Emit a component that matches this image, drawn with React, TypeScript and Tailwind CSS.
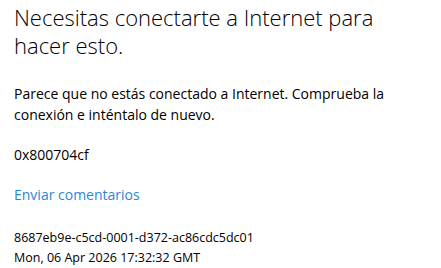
const App = () => {
  return (
    <div className="w-[441px] h-[268px] bg-white text-black px-[14px] pt-[3px] font-['Segoe_UI','Open_Sans',sans-serif]">
      <h1 className="text-[22px] leading-[28px] font-light">
        Necesitas conectarte a Internet para hacer esto.
      </h1>
      <p className="mt-[24px] text-[14px] leading-[21px]">
        Parece que no estás conectado a Internet. Comprueba la conexión e inténtalo de nuevo.
      </p>
      <p className="mt-[19px] text-[14px] leading-[21px]">0x800704cf</p>
      <a href="#" className="block mt-[19px] text-[14px] leading-[21px] text-[#2b86d6]">
        Enviar comentarios
      </a>
      <div className="mt-[23px] text-[12.5px] leading-[20px]">
        <div>8687eb9e-c5cd-0001-d372-ac86cdc5dc01</div>
        <div>Mon, 06 Apr 2026 17:32:32 GMT</div>
      </div>
    </div>
  );
};

export default App;
